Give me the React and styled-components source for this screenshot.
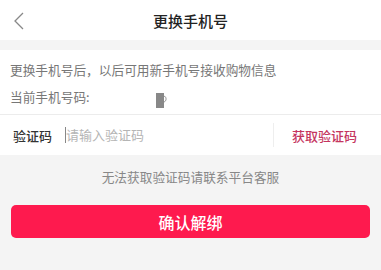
import React from 'react'
import styled, { createGlobalStyle } from 'styled-components'

const GlobalStyle = createGlobalStyle`
    body {
        margin: 0;
        background: #f4f4f4;
        font-family: "Noto Sans CJK SC", "Noto Sans", sans-serif;
    }
`

const Page = styled.div`
    width: 381px;
    min-height: 270px;
    background: #f4f4f4;
`

const Header = styled.div`
    position: relative;
    height: 40px;
    background: #fff;
    display: flex;
    align-items: center;
    justify-content: center;
`

const Back = styled.div`
    position: absolute;
    left: 12px;
    top: 11px;
    width: 16px;
    height: 18px;
`

const Title = styled.div`
    font-size: 15px;
    font-weight: 500;
    color: #222;
`

const Info = styled.div`
    margin-top: 10px;
    background: #fff;
    padding: 6px 10px 4px;
    border-bottom: 1px solid #ececec;
`

const InfoLine = styled.div`
    display: flex;
    align-items: center;
    height: 27px;
    font-size: 12.7px;
    color: #777;
`

const Mug = styled.div`
    margin-left: 66px;
    margin-top: 6px;
    width: 12px;
    height: 16px;
`

const CodeRow = styled.div`
    display: flex;
    align-items: center;
    height: 40px;
    background: #fff;
    padding: 0 0 0 13px;
`

const Label = styled.div`
    font-size: 13px;
    font-weight: 500;
    color: #333;
    width: 52px;
`

const Placeholder = styled.div`
    flex: 1;
    font-size: 13px;
    color: #b5b5b5;
    border-left: 1px solid #888;
    line-height: 16px;
`

const Divider = styled.div`
    width: 1px;
    height: 24px;
    background: #eee;
`

const GetCode = styled.div`
    width: 101px;
    padding-right: 6px;
    text-align: center;
    font-size: 13px;
    font-weight: 500;
    color: #c53560;
`

const Help = styled.div`
    margin-top: 12px;
    text-align: center;
    font-size: 12.7px;
    color: #888;
`

const Button = styled.button`
    display: block;
    margin: 19px 11px 0;
    width: 359px;
    height: 33px;
    border: none;
    border-radius: 5px;
    background: #fe1a4e;
    color: #fff;
    font-family: "Noto Sans CJK SC", sans-serif;
    font-size: 16px;
    font-weight: 500;
`

export default function App() {
    return (
        <Page>
            <GlobalStyle />
            <Header>
                <Back>
                    <svg width="16" height="18" viewBox="0 0 16 18">
                        <polyline points="11,1 3,9 11,17" fill="none" stroke="#888" strokeWidth="1.3" />
                    </svg>
                </Back>
                <Title>更换手机号</Title>
            </Header>
            <Info>
                <InfoLine>更换手机号后，以后可用新手机号接收购物信息</InfoLine>
                <InfoLine>
                    当前手机号码:
                    <Mug>
                        <svg width="12" height="16" viewBox="0 0 12 16">
                            <rect x="0" y="1" width="8" height="15" fill="#888" />
                            <path d="M8 4 Q11 5 10 8 Q9 10 8 10" fill="none" stroke="#999" strokeWidth="1" />
                        </svg>
                    </Mug>
                </InfoLine>
            </Info>
            <CodeRow>
                <Label>验证码</Label>
                <Placeholder>请输入验证码</Placeholder>
                <Divider />
                <GetCode>获取验证码</GetCode>
            </CodeRow>
            <Help>无法获取验证码请联系平台客服</Help>
            <Button>确认解绑</Button>
        </Page>
    )
}
